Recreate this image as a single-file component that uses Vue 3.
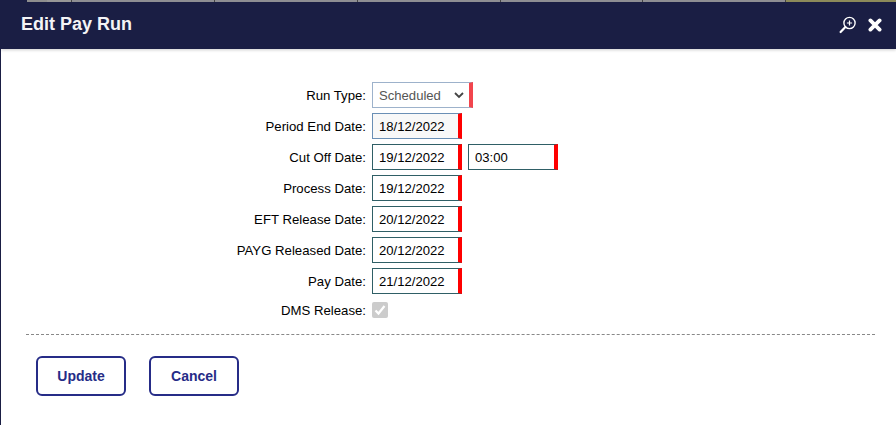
<script setup>
// top row of the pay run form, the rest are plain date fields
const dateRows = [
  { label: 'Period End Date:', value: '18/12/2022', filled: true },
  { label: 'Cut Off Date:', value: '19/12/2022', time: '03:00' },
  { label: 'Process Date:', value: '19/12/2022' },
  { label: 'EFT Release Date:', value: '20/12/2022' },
  { label: 'PAYG Released Date:', value: '20/12/2022' },
  { label: 'Pay Date:', value: '21/12/2022' },
]
const strip = [
  { w: 27, c: '#1a1e44' }, { w: 20, c: '#8e8e8e' }, { w: 25, c: '#979797', edge: true },
  { w: 143, c: '#8e8e93', edge: true }, { w: 143, c: '#8e8e93', edge: true }, { w: 143, c: '#8e8e93', edge: true },
  { w: 142, c: '#8e8e93', edge: true }, { w: 143, c: '#8e8e93', edge: true }, { w: 110, c: '#8c8a5a' },
]
</script>

<template>
  <div class="page">
    <div class="strip">
      <span v-for="(s, i) in strip" :key="i" class="seg" :class="{ edge: s.edge }" :style="{ width: s.w + 'px', background: s.c }"></span>
    </div>
    <header class="head">
      <h1>Edit Pay Run</h1>
      <div class="head-icons">
        <svg width="18" height="18" viewBox="0 0 18 18" fill="none" stroke="#fff">
          <circle cx="10.5" cy="7" r="5.6" stroke-width="1.4" />
          <path d="M10.5 4.4v5.2M7.9 7h5.2" stroke-width="1.2" />
          <path d="M6.4 11 1.6 16" stroke-width="2.2" stroke-linecap="round" />
        </svg>
        <svg width="14" height="14" viewBox="0 0 14 14" fill="none" stroke="#fff">
          <path d="M2.4 2.4l9.2 9.2M11.6 2.4l-9.2 9.2" stroke-width="3.8" stroke-linecap="round" />
        </svg>
      </div>
    </header>

    <form class="form" @submit.prevent>
      <div class="row">
        <label class="lbl">Run Type:</label>
        <div class="select-wrap">
          <select class="select">
            <option>Scheduled</option>
          </select>
          <svg class="chev" width="10" height="7" viewBox="0 0 10 7" fill="none" stroke="#444" stroke-width="1.8">
            <path d="M1 1l4 4 4-4" />
          </svg>
        </div>
      </div>
      <div v-for="r in dateRows" :key="r.label" class="row">
        <label class="lbl">{{ r.label }}</label>
        <input class="field" :class="{ filled: r.filled }" :value="r.value" />
        <input v-if="r.time" class="field time" :value="r.time" />
      </div>
      <div class="row last">
        <label class="lbl">DMS Release:</label>
        <span class="check">
          <svg width="12" height="12" viewBox="0 0 12 12" fill="none" stroke="#fff" stroke-width="2.2">
            <path d="M1.5 6.5l3 3 6-7.5" />
          </svg>
        </span>
      </div>
    </form>

    <div class="line"></div>

    <div class="actions">
      <button class="btn">Update</button>
      <button class="btn">Cancel</button>
    </div>
  </div>
</template>

<style>
html, body {
  margin: 0;
  background: #fff;
}
</style>

<style scoped>
.page {
  width: 896px;
  height: 425px;
  overflow: hidden;
  box-sizing: border-box;
  border-left: 1px solid #1a1e44;
  background: #fff;
  font-family: "Liberation Sans", Arial, sans-serif;
  color: #000;
}
.strip {
  display: flex;
  height: 2px;
  margin-left: -1px;
}
.seg {
  display: block;
  flex: none;
  box-sizing: border-box;
}
.seg.edge {
  border-right: 1px solid #444;
}
.head {
  height: 47px;
  box-sizing: border-box;
  background: #1a1e44;
  display: flex;
  align-items: center;
  justify-content: space-between;
  padding: 0 14px 2px 20px;
  box-shadow: 0 1px 3px rgba(0, 0, 0, 0.2);
}
.head h1 {
  margin: 0;
  font-size: 18px;
  font-weight: bold;
  color: #f4f4f6;
}
.head-icons {
  display: flex;
  align-items: center;
  gap: 11px;
}
.form {
  display: flex;
  flex-direction: column;
  gap: 5px;
  padding-top: 33px;
}
.row {
  display: flex;
  align-items: center;
  height: 26px;
}
.row.last {
  height: 22px;
}
.lbl {
  width: 371px;
  padding-right: 6px;
  box-sizing: border-box;
  text-align: right;
  font-size: 13.2px;
}
.select-wrap {
  position: relative;
  width: 101px;
  height: 26px;
}
.select {
  appearance: none;
  width: 100%;
  height: 100%;
  box-sizing: border-box;
  border: 1px solid #9db2cb;
  border-right: 4px solid #f2454d;
  border-radius: 0;
  background: #fff;
  padding: 0 0 0 6px;
  font-family: inherit;
  font-size: 13.1px;
  color: #555;
}
.chev {
  position: absolute;
  right: 9px;
  top: 10px;
}
.field {
  width: 90px;
  height: 26px;
  box-sizing: border-box;
  border: 1px solid #2f5f66;
  border-right: 4px solid #f00;
  border-radius: 0;
  background: #fff;
  padding: 0 0 0 6px;
  font-family: inherit;
  font-size: 13.1px;
  color: #000;
  outline: none;
}
.field.filled {
  background: #f8f8f8;
  border-color: #6a8fb5;
  border-right-color: #f00;
}
.field.time {
  width: 90px;
  margin-left: 6px;
}
.check {
  width: 16px;
  height: 16px;
  border-radius: 2px;
  background: #ccc;
  display: flex;
  align-items: center;
  justify-content: center;
}
.line {
  margin: 13px 21px 0 25px;
  border-top: 1px dashed #888;
}
.actions {
  display: flex;
  gap: 23px;
  padding: 21px 0 0 35px;
}
.btn {
  width: 90px;
  height: 40px;
  border: 2px solid #262c87;
  border-radius: 6px;
  background: #fff;
  color: #262c87;
  font-family: inherit;
  font-size: 14px;
  font-weight: bold;
}
</style>
